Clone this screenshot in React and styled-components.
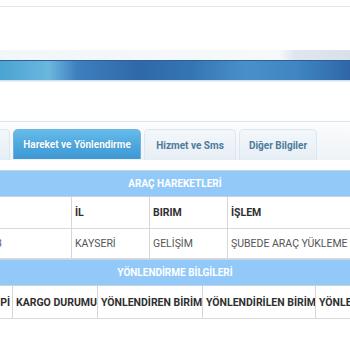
import React from "react";
import styled, { createGlobalStyle } from "styled-components";

const Global = createGlobalStyle`
  html, body { margin: 0; padding: 0; background: #fff; }
  body { font-family: Roboto, "Noto Sans", Arial, sans-serif; overflow: hidden; }
`;

const Page = styled.div`
  width: 350px;
  height: 350px;
  overflow: hidden;
  display: flex;
  flex-direction: column;
`;

const TopLine = styled.div`
  height: 6px;
  border-bottom: 1px solid #e6e6e6;
  flex: none;
`;

const Banner = styled.div`
  margin-top: 43px;
  height: 32px;
  display: flex;
  flex-direction: column;
  flex: none;
`;

const BannerSky = styled.div`
  height: 10px;
  background: linear-gradient(90deg, #f3f6f8 0%, #f6f8fa 80%, #dfe6ee 84%, #d8e0e8 100%);
`;

const BannerBar = styled.div`
  height: 20px;
  border-top: 1px solid #2e5f95;
  background: linear-gradient(90deg, #4aa3d2 0%, #6bb7de 14%, #3e7fbf 22%, #2f68a8 40%, #3476b4 55%, #4a90c8 70%, #3f86c2 85%, #2f66a8 100%);
`;

const BannerShadow = styled.div`
  height: 2px;
  background: linear-gradient(#c9dbea, #f3f7fa);
`;

const TabBar = styled.div`
  margin-top: 39px;
  height: 38px;
  border-top: 1px solid #dde3e8;
  background: linear-gradient(#fbfcfd, #eef3f7);
  display: flex;
  align-items: flex-end;
  gap: 3px;
  flex: none;
`;

const Tab = styled.div`
  height: ${(p) => (p.$active ? "30px" : "31px")};
  margin-bottom: ${(p) => (p.$active ? "1px" : "0")};
  width: ${(p) => p.$w}px;
  box-sizing: border-box;
  border: 1px solid ${(p) => (p.$active ? "#6fb5df" : "#dce6ee")};
  border-bottom: none;
  border-radius: 5px 5px 0 0;
  background: ${(p) =>
    p.$active
      ? "linear-gradient(#66bbea, #4aa4dc 60%, #3f98d4)"
      : "linear-gradient(#f3f7fa, #e6eef5)"};
  color: ${(p) => (p.$active ? "#fff" : "#4d7b9c")};
  font-size: 10px;
  font-weight: 700;
  display: flex;
  align-items: center;
  justify-content: center;
  white-space: nowrap;
  flex: none;
  text-shadow: ${(p) => (p.$active ? "0 0 1px rgba(0,60,110,0.3)" : "none")};
`;

const EdgeTab = styled(Tab)`
  border-left: none;
  border-radius: 0 5px 0 0;
`;

const Section = styled.div`
  margin-top: 10px;
  width: 350px;
  overflow: hidden;
  flex: none;
`;

const SectionTitle = styled.div`
  height: 25px;
  border-top: 1px solid #c4d4e2;
  border-bottom: 1px solid #c4d4e2;
  background: #92c9f8;
  color: #fff;
  font-size: 10px;
  font-weight: 700;
  display: flex;
  align-items: center;
  justify-content: center;
`;

const Row = styled.div`
  display: grid;
  grid-template-columns: ${(p) => p.$cols};
  margin-left: ${(p) => p.$shift}px;
  height: ${(p) => p.$h}px;
  border-bottom: 1px solid #dadada;
`;

const Cell = styled.div`
  border-right: 1px solid #d6d6d6;
  padding-left: 3px;
  padding-right: ${(p) => p.$pr || 0}px;
  display: flex;
  align-items: center;
  justify-content: ${(p) => (p.$end ? "flex-end" : "flex-start")};
  font-size: 10.5px;
  font-weight: ${(p) => (p.$head ? 700 : 400)};
  color: ${(p) => (p.$head ? "#2f2f2f" : "#555")};
  white-space: nowrap;
  overflow: hidden;
  &:last-child { border-right: none; }
`;

const cols1 = "100px 78px 78px 200px";
const cols2 = "60px 85px 105px 113px 100px";

export default function App() {
  return (
    <Page>
      <Global />
      <TopLine />
      <Banner>
        <BannerSky />
        <BannerBar />
        <BannerShadow />
      </Banner>
      <TabBar>
        <EdgeTab $w={10} />
        <Tab $active $w={128}>Hareket ve Yönlendirme</Tab>
        <Tab $w={92}>Hizmet ve Sms</Tab>
        <Tab $w={78}>Diğer Bilgiler</Tab>
      </TabBar>
      <Section>
        <SectionTitle>ARAÇ HAREKETLERİ</SectionTitle>
        <Row $cols={cols1} $shift={-28} $h={31}>
          <Cell $head></Cell>
          <Cell $head>İL</Cell>
          <Cell $head>BIRIM</Cell>
          <Cell $head>İŞLEM</Cell>
        </Row>
        <Row $cols={cols1} $shift={-28} $h={29}>
          <Cell $end $pr={69}>3</Cell>
          <Cell>KAYSERİ</Cell>
          <Cell>GELİŞİM</Cell>
          <Cell>ŞUBEDE ARAÇ YÜKLEME</Cell>
        </Row>
        <SectionTitle>YÖNLENDİRME BİLGİLERİ</SectionTitle>
        <Row $cols={cols2} $shift={-47} $h={32}>
          <Cell $head $end $pr={2}>TİPİ</Cell>
          <Cell $head>KARGO DURUMU</Cell>
          <Cell $head>YÖNLENDİREN BİRİM</Cell>
          <Cell $head>YÖNLENDİRİLEN BİRİM</Cell>
          <Cell $head>YÖNLENDİRME</Cell>
        </Row>
      </Section>
    </Page>
  );
}
